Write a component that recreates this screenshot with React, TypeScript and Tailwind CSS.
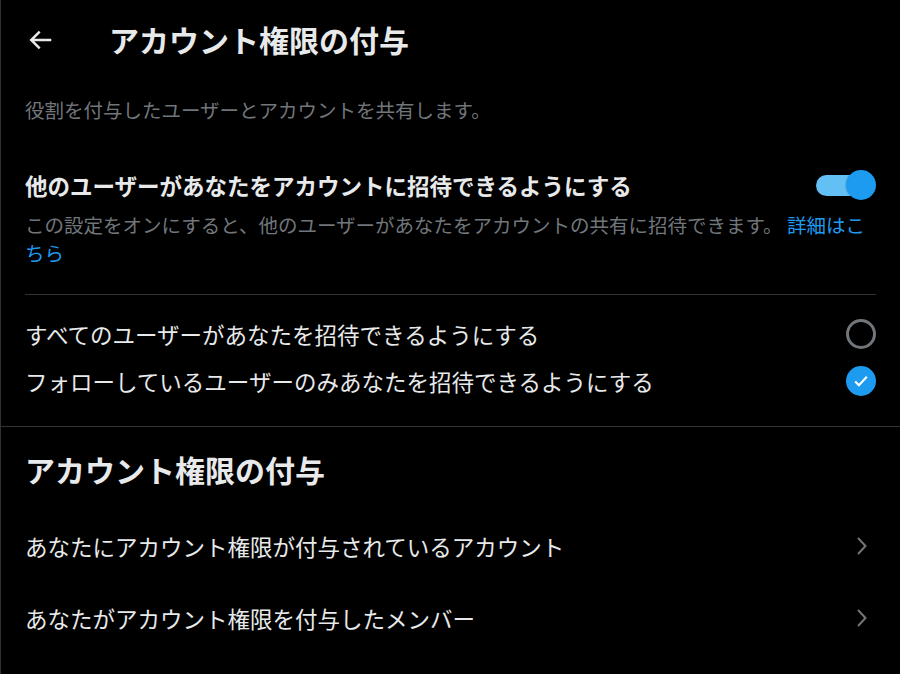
import React from "react";

const font = { fontFamily: '"Noto Sans CJK JP", "Noto Sans", sans-serif' };

function BackArrow() {
  return (
    <svg viewBox="0 0 24 24" className="w-[30px] h-[30px] fill-[#e7e9ea]">
      <path d="M7.414 13l5.043 5.04-1.414 1.42L3.586 12l7.457-7.46 1.414 1.42L7.414 11H21v2H7.414z" />
    </svg>
  );
}

function Chevron() {
  return (
    <svg viewBox="0 0 12 20" className="w-[12px] h-[20px]" fill="none">
      <path d="M2 2l7.5 8L2 18" stroke="#71767b" strokeWidth="2" />
    </svg>
  );
}

function Radio({ checked }: { checked?: boolean }) {
  if (checked) {
    return (
      <div className="w-[30px] h-[30px] rounded-full bg-[#1d9bf0] flex items-center justify-center">
        <svg viewBox="0 0 24 24" className="w-[20px] h-[20px]" fill="none">
          <path d="M5 12.5l4.5 4.5L19 7" stroke="#ffffff" strokeWidth="2.6" />
        </svg>
      </div>
    );
  }
  return <div className="w-[30px] h-[30px] rounded-full border-[3px] border-[#71767b]" />;
}

function Toggle() {
  return (
    <div className="relative w-[60px] h-[30px] flex items-center">
      <div className="w-[52px] h-[21px] rounded-full bg-[#63c0f5]" />
      <div className="absolute right-0 top-0 w-[30px] h-[30px] rounded-full bg-[#1d9bf0] shadow-[0_0_2px_rgba(0,0,0,0.35)]" />
    </div>
  );
}

export default function App() {
  const options = [
    { label: "すべてのユーザーがあなたを招待できるようにする", checked: false },
    { label: "フォローしているユーザーのみあなたを招待できるようにする", checked: true },
  ];
  const links = [
    "あなたにアカウント権限が付与されているアカウント",
    "あなたがアカウント権限を付与したメンバー",
  ];

  return (
    <div
      style={font}
      className="w-full h-screen bg-black text-[#e7e9ea] border-l border-[#2f3336] overflow-hidden"
    >
      {/* header */}
      <div className="h-[80px] flex items-center px-[24px]">
        <div className="w-[84px] flex items-center">
          <BackArrow />
        </div>
        <h1 className="text-[30px] leading-[36px] font-bold -mt-[2px]">アカウント権限の付与</h1>
      </div>

      <div className="px-[24px] py-[18px] text-[19.5px] leading-[24px] text-[#71767b]">
        役割を付与したユーザーとアカウントを共有します。
      </div>

      {/* invite toggle */}
      <div className="px-[24px] pt-[30px]">
        <div className="flex items-center justify-between h-[30px]">
          <span className="text-[22.5px] leading-[30px] font-bold">
            他のユーザーがあなたをアカウントに招待できるようにする
          </span>
          <Toggle />
        </div>
        <p className="mt-[11px] text-[19.5px] leading-[28px] text-[#71767b]">
          この設定をオンにすると、他のユーザーがあなたをアカウントの共有に招待できます。{" "}
          <span className="text-[#1d9bf0]">詳細はこちら</span>
        </p>
        <div className="mt-[27px] border-t border-[#2f3336]" />
        <div className="pt-[15px] pb-[22px]">
          {options.map((o) => (
            <div key={o.label} className="h-[47px] flex items-center justify-between">
              <span className="text-[22.5px] leading-[30px]">{o.label}</span>
              <Radio checked={o.checked} />
            </div>
          ))}
        </div>
      </div>

      <div className="border-t border-[#2f3336]" />

      <div className="px-[24px] pt-[24px] pb-[23px]">
        <h2 className="text-[30px] leading-[36px] font-bold">アカウント権限の付与</h2>
      </div>

      {links.map((l) => (
        <div key={l} className="h-[72px] px-[24px] flex items-center justify-between">
          <span className="text-[22.5px] leading-[30px]">{l}</span>
          <div className="pr-[8px]">
            <Chevron />
          </div>
        </div>
      ))}
    </div>
  );
}
